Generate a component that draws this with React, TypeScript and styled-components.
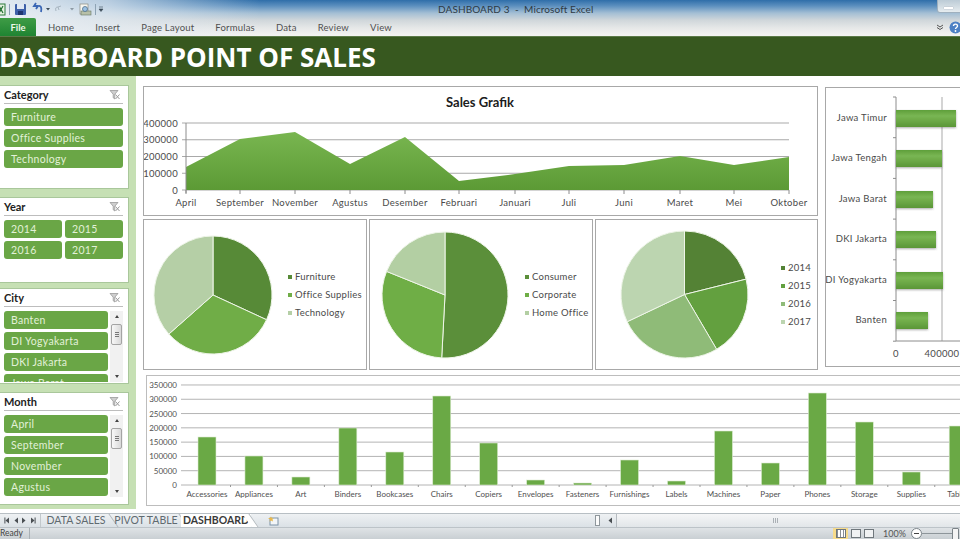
import styled, { createGlobalStyle } from "styled-components";

const GlobalStyle = createGlobalStyle`
    html, body { margin: 0; padding: 0; background: #fff; }
    * { box-sizing: border-box; }
`;

const Page = styled.div`
    width: 960px; height: 539px; overflow: hidden; display: flex; flex-direction: column;
    font-family: Lato, "Open Sans", sans-serif; color: #444;
`;

/* window chrome */
const Chrome = styled.header`
    height: 36px; flex: none;
    background:
        linear-gradient(90deg, rgba(235,240,245,.95) 0, rgba(225,233,240,.75) 110px, rgba(210,225,238,0) 260px),
        linear-gradient(180deg, #2f6ea9 0, #5d90bf 6px, #a3bed4 13px, #cfd6da 20px, #e6e8e8 28px, #f4f4f2 36px);
`;

const TitleBar = styled.div`
    height: 18px; display: flex; align-items: center; position: relative;
`;

const QuickAccess = styled.div`
    width: 438px; display: flex; align-items: center; height: 100%;
`;

const WindowTitle = styled.div`
    font-size: 10px; color: #2e3a44; letter-spacing: .1px; white-space: pre;
`;

const WindowButton = styled.div`
    margin-left: auto; margin-right: -18px; width: 41px; height: 13px; margin-top: -5px;
    border: 1px solid #9fb0be; border-top: 0; border-radius: 0 0 3px 3px;
    background: linear-gradient(180deg, #bccbd6, #e6ecef);
    display: flex; align-items: center; padding-left: 6px;
    &::before { content: ""; width: 9px; height: 2px; background: #fff; box-shadow: 0 0 1px #667; margin-top: 3px; }
`;

const TabRow = styled.nav`
    height: 18px; display: flex; align-items: center;
`;

const FileTab = styled.div`
    width: 36px; height: 18px; display: flex; align-items: center; justify-content: center;
    font-size: 9.5px; font-weight: 700; color: #eef8ea; border-radius: 0 2px 0 0;
    background: linear-gradient(180deg, #3f9c46, #1f8432);
`;

const RibbonTabs = styled.div`
    display: flex; gap: 21px; margin-left: 12px;
`;

const RibbonTab = styled.span`
    font-size: 9.5px; color: #505050; letter-spacing: .2px;
`;

const HelpGroup = styled.div`
    margin-left: auto; display: flex; align-items: center; gap: 5px; margin-right: -2px;
`;

const Banner = styled.div`
    height: 40px; flex: none; background: #37581f; display: flex; align-items: center;
    border-top: 1px solid #5c7a48;
`;

const BannerTitle = styled.h1`
    margin: 0 0 0 -1px; font-size: 26px; line-height: 1; font-weight: 700; color: #fff; white-space: nowrap;
    font-family: "Open Sans", Lato, sans-serif;
`;

const Body = styled.div`
    height: 437px; flex: none; display: flex; overflow: hidden;
`;

/* slicers */
const Sidebar = styled.aside`
    width: 136px; height: 433px; flex: none; background: #c6e0b4; padding-top: 9px;
    display: flex; flex-direction: column; align-items: flex-start;
`;

const Slicer = styled.section<{ $height: number; $gap: number }>`
    width: 129px; height: ${p => p.$height}px; margin-bottom: ${p => p.$gap}px; flex: none;
    background: #fff; border: 1px solid #a9c79b; border-left: 0; padding: 0 5px 0 4px; overflow: hidden;
`;

const SlicerHead = styled.div`
    height: 18px; display: flex; align-items: center; justify-content: space-between;
    border-bottom: 1px solid #bdbdbd; margin-bottom: 4px; padding-right: 2px;
`;

const SlicerTitle = styled.span`
    font-size: 11px; font-weight: 700; color: #222;
`;

const SlicerRows = styled.div`
    display: flex; gap: 2px;
`;

const ButtonList = styled.div<{ $cols?: number; $height?: number }>`
    flex: 1; display: grid; grid-template-columns: repeat(${p => p.$cols ?? 1}, 1fr);
    grid-auto-rows: 18px; gap: 3px; overflow: hidden;
    ${p => p.$height ? `height: ${p.$height}px;` : ""}
`;

const SlicerButton = styled.div`
    background: #6aa646; border-radius: 3px; padding-left: 7px; font-size: 10.5px; letter-spacing: .3px;
    line-height: 18px; color: #e2f1d8; white-space: nowrap;
`;

const ScrollTrack = styled.div<{ $height: number }>`
    width: 13px; height: ${p => p.$height}px; flex: none; background: #f1f1f1; position: relative;
    display: flex; flex-direction: column; justify-content: space-between; align-items: center; padding: 4px 0;
`;

const ScrollArrow = styled.span<{ $down?: boolean }>`
    width: 0; height: 0; border-left: 2.5px solid transparent; border-right: 2.5px solid transparent;
    ${p => p.$down ? "border-top: 3px solid #444;" : "border-bottom: 3px solid #444;"}
`;

const ScrollThumb = styled.span`
    position: absolute; top: 13px; left: 1px; width: 11px; height: 21px; border: 1px solid #a4a4a4; border-radius: 2px;
    background: linear-gradient(90deg, #f8f8f8, #d9d9d9);
    &::after { content: ""; position: absolute; left: 3px; top: 7px; width: 4px; height: 5px;
        background: repeating-linear-gradient(180deg, #777 0 1px, transparent 1px 2px); }
`;

/* chart cards */
const Content = styled.main`
    flex: 1; padding: 10px 0 0 7px; display: flex; flex-direction: column; gap: 5px; min-width: 0;
`;

const TopRow = styled.div`
    display: flex; gap: 7px;
`;

const LeftColumn = styled.div`
    width: 675px; flex: none; display: flex; flex-direction: column; gap: 3px;
`;

const Card = styled.div`
    background: #fff; border: 1px solid #a8a8a8; overflow: hidden;
`;

const SalesCard = styled(Card)`
    height: 130px; position: relative;
`;

const PieRow = styled.div`
    display: flex; gap: 2px; height: 151px;
`;

const PieCard = styled(Card)<{ $width: number; $inset: number }>`
    width: ${p => p.$width}px; flex: none; padding-left: ${p => p.$inset}px;
    display: flex; align-items: center;
`;

const Legend = styled.ul<{ $gap: number }>`
    list-style: none; margin: 0 0 0 ${p => p.$gap}px; padding: 0; display: flex; flex-direction: column; gap: 4px;
`;

const LegendItem = styled.li<{ $color: string }>`
    height: 14px; display: flex; align-items: center; gap: 3px; font-size: 9.5px; letter-spacing: .25px; color: #4a4a4a; white-space: nowrap;
    &::before { content: ""; width: 4px; height: 4px; background: ${p => p.$color}; }
`;

const CityCard = styled(Card)`
    width: 137px; height: 280px; flex: none; margin-top: 1px;
`;

const ProductCard = styled(Card)`
    width: 816px; height: 131px; flex: none; margin-left: 3px; border-color: #bdbdbd;
`;

const ChartSvg = styled.svg`
    display: block;
`;

const ChartTitle = styled.text`
    font-size: 13px; font-weight: 700; fill: #1c1c1c; text-anchor: middle;
`;

const AxisText = styled.text<{ $anchor?: string }>`
    font-size: 9.5px; fill: #4a4a4a; letter-spacing: .3px; text-anchor: ${p => p.$anchor ?? "middle"};
`;

const SmallAxisText = styled.text<{ $anchor?: string }>`
    font-size: 8px; fill: #505050; text-anchor: ${p => p.$anchor ?? "middle"};
`;

/* sheet tabs and status bar */
const SheetBar = styled.div`
    height: 14px; flex: none; display: flex; align-items: stretch; border-top: 1px solid #b8bfc4;
    background: linear-gradient(180deg, #eef1f3, #dbe1e6);
`;

const SheetNav = styled.div`
    width: 41px; flex: none; display: flex; align-items: center; justify-content: space-around;
    border-right: 1px solid #c2c8cc; padding: 0 3px;
`;

const SheetTab = styled.div<{ $active?: boolean; $width: number }>`
    width: ${p => p.$width}px; flex: none; position: relative; text-align: center; line-height: 13px;
    font-size: 10.5px; white-space: nowrap;
    color: ${p => p.$active ? "#3a3a3a" : "#5f6a70"}; font-weight: ${p => p.$active ? 700 : 400};
    background: ${p => p.$active ? "#fff" : "transparent"};
    &::after { content: ""; position: absolute; right: -3px; top: 0; height: 100%; width: 6px;
        border-right: 1px solid #aeb5ba; transform: skewX(35deg); background: ${p => p.$active ? "#fff" : "transparent"}; }
`;

const NewSheet = styled.div`
    width: 32px; flex: none; margin-left: 6px; display: flex; align-items: center; justify-content: center;
`;

const SheetSpacer = styled.div`
    flex: 1;
`;

const SplitHandle = styled.div`
    width: 5px; flex: none; margin: 1px 4px 1px 0; border: 1px solid #8f979c; background: #fbfbfb;
`;

const ArrowLeft = styled.div`
    width: 12px; flex: none; display: flex; align-items: center; justify-content: center;
`;

const HScroll = styled.div`
    width: 344px; flex: none; background: linear-gradient(180deg, #f5f6f7, #e2e6e9); border-left: 1px solid #b5bbc0;
    display: flex; align-items: center; justify-content: center; padding-right: 26px;
    &::after { content: ""; width: 6px; height: 5px; background: repeating-linear-gradient(90deg, #aab0b5 0 1px, transparent 1px 2px); }
`;

const StatusBar = styled.footer`
    height: 12px; flex: none; display: flex; align-items: center; border-top: 1px solid #bcc3c8;
    background: linear-gradient(180deg, #dfe3e6, #c9cfd3);
`;

const StatusText = styled.span`
    width: 30px; font-size: 8.5px; color: #444; padding-left: 0; border-right: 1px solid #a9b0b5; line-height: 11px;
`;

const ViewButtons = styled.div`
    margin-left: auto; display: flex; align-items: center; gap: 2px;
`;

const ViewButton = styled.div<{ $active?: boolean }>`
    width: ${p => p.$active ? 15 : 11}px; height: 11px; display: flex; align-items: center; justify-content: center;
    background: ${p => p.$active ? "#f7dc8c" : "transparent"};
    &::after { content: ""; width: 8px; height: 7px; border: 1px solid #6f777c;
        background: ${p => p.$active ? "repeating-linear-gradient(90deg, #8a8f93 0 1px, #fff 1px 3px)" : "#f0f2f3"}; }
`;

const ZoomLabel = styled.span`
    font-size: 9px; color: #555; margin-left: 9px; width: 22px;
`;

const ZoomMinus = styled.span`
    width: 11px; height: 11px; border-radius: 50%; margin-left: 6px; border: 1px solid #7c858b; background: #fff;
    display: flex; align-items: center; justify-content: center; flex: none;
    &::after { content: ""; width: 5px; height: 1px; background: #444; }
`;

const ZoomTrack = styled.span`
    width: 33px; height: 1px; flex: none; background: #8d959a; position: relative; margin-right: 5px;
    &::after { content: ""; position: absolute; right: -4px; top: -5px; width: 5px; height: 10px;
        background: #f5f5f5; border: 1px solid #7b8388; border-radius: 1px; }
`;

/* data */
const months = [
    ["April", 186, 167], ["September", 240, 139], ["November", 295, 132], ["Agustus", 350, 164],
    ["Desember", 405, 137], ["Februari", 459, 181], ["Januari", 515, 174], ["Juli", 569, 166],
    ["Juni", 624, 165], ["Maret", 680, 156], ["Mei", 734, 165], ["Oktober", 789, 157],
] as const;

const pies = [
    {
        width: 224, inset: 9, r: 59, gap: 15, stops: [114.8, 228.5, 360],
        colors: ["#578a37", "#70ad47", "#b5cfa6"], legend: ["Furniture", "Office Supplies", "Technology"],
    },
    {
        width: 224, inset: 11, r: 63, gap: 16, stops: [183, 292, 360],
        colors: ["#5b8f3a", "#6fae46", "#b3cfa3"], legend: ["Consumer", "Corporate", "Home Office"],
    },
    {
        width: 223, inset: 24, r: 63.5, gap: 32, stops: [76, 149.6, 244.6, 360],
        colors: ["#548235", "#63a03f", "#8fbb78", "#bcd5b0"], legend: ["2014", "2015", "2016", "2017"],
    },
];

const cities = [
    ["Jawa Timur", 111, 956], ["Jawa Tengah", 151, 942], ["Jawa Barat", 192, 933],
    ["DKI Jakarta", 232, 936], ["DI Yogyakarta", 273, 943], ["Banten", 313, 928],
] as const;

const products = [
    ["Accessories", 437], ["Appliances", 456], ["Art", 477], ["Binders", 428], ["Bookcases", 452], ["Chairs", 396],
    ["Copiers", 443], ["Envelopes", 480], ["Fasteners", 483], ["Furnishings", 460], ["Labels", 481], ["Machines", 431],
    ["Paper", 463], ["Phones", 393], ["Storage", 422], ["Supplies", 472], ["Tables", 426],
] as const;

const ClearIcon = () => (
    <svg width="12" height="12" viewBox="0 0 12 12">
        <path d="M1 1.5h8L5.8 5.2V10L4.2 8.8V5.2Z" fill="#cfcfcf" stroke="#8f8f8f" strokeWidth=".7" />
        <path d="M6.5 5.5l4 4.5M10.5 5.5l-4 4.5" stroke="#9a9a9a" strokeWidth="1" />
    </svg>
);

const Triangle = ({ dir = 1, bar = false }: { dir?: number; bar?: boolean }) => (
    <svg width="6" height="7" viewBox="0 0 6 7">
        <path d={dir > 0 ? "M1 .5 4.5 3.5 1 6.5Z" : "M5 .5 1.5 3.5 5 6.5Z"} fill="#4a4f53" />
        {bar ? <rect x={dir > 0 ? 4.6 : 0.4} y=".5" width="1" height="6" fill="#4a4f53" /> : null}
    </svg>
);

const QuickIcons = () => (
    <ChartSvg width="110" height="16" viewBox="0 0 110 16">
        <rect x="-6" y="3" width="11" height="11" fill="#e6f2e2" stroke="#2b7a3b" />
        <path d="M-1 5l4 7M3 5l-4 7" stroke="#1f6f30" strokeWidth="1.2" />
        <rect x="9" y="3" width="1" height="11" fill="#8ea3b4" />
        <rect x="15" y="3" width="11" height="11" rx="1" fill="#3d5fa8" />
        <rect x="17" y="3" width="7" height="5" fill="#dfe7f3" />
        <rect x="18" y="10" width="5" height="4" fill="#1f3570" />
        <path d="M38 5c3-1 4 2 3 6M38 5l-4 0 2-3M38 5l-2 3" stroke="#3a66b4" strokeWidth="1.8" fill="none" />
        <path d="M46 7h4l-2 2.5Z" fill="#3b4a58" />
        <path d="M58 6c-2 0-3 1-2 4M61 5l-3 1 1 3" stroke="#a7b5c0" strokeWidth="1" fill="none" />
        <path d="M70 7h4l-2 2.5Z" fill="#8d9aa5" />
        <rect x="80" y="3" width="8" height="10" fill="#f6f6f0" stroke="#8b8b80" strokeWidth=".7" />
        <rect x="81" y="10" width="10" height="4" fill="#b8c0a8" stroke="#676" strokeWidth=".6" />
        <circle cx="85" cy="8" r="2.5" fill="#9cc2e4" stroke="#50708c" strokeWidth=".8" />
        <rect x="95" y="3" width="1" height="11" fill="#8ea3b4" />
        <path d="M99 6h4M99 8h4l-2 2.5Z" stroke="#3b4a58" strokeWidth=".6" fill="#3b4a58" />
    </ChartSvg>
);

const polar = (cx: number, cy: number, r: number, deg: number) => {
    const a = (deg - 90) * Math.PI / 180;
    return [cx + r * Math.cos(a), cy + r * Math.sin(a)];
};

const Pie = ({ r, stops, colors }: { r: number; stops: number[]; colors: string[] }) => {
    const c = r + 1;
    return (
        <ChartSvg width={c * 2} height={c * 2} viewBox={`0 0 ${c * 2} ${c * 2}`}>
            {stops.map((end, i) => {
                const start = i ? stops[i - 1] : 0;
                const [x1, y1] = polar(c, c, r, start);
                const [x2, y2] = polar(c, c, r, end);
                return (
                    <path
                        key={i}
                        d={`M${c} ${c}L${x1} ${y1}A${r} ${r} 0 ${end - start > 180 ? 1 : 0} 1 ${x2} ${y2}Z`}
                        fill={colors[i]}
                        stroke="#eef5e8"
                        strokeWidth="1"
                    />
                );
            })}
        </ChartSvg>
    );
};

// coordinates below are page pixels, shifted by the card origin
const SalesChart = () => {
    const ox = 144, oy = 87;
    const area = months.map(m => `${m[1] - ox},${m[2] - oy}`).join(" ");
    return (
        <ChartSvg width="673" height="128" viewBox="0 0 673 128">
            <defs>
                <linearGradient id="areaFill" x1="0" y1="0" x2="0" y2="1">
                    <stop offset="0" stopColor="#79b650" />
                    <stop offset="1" stopColor="#5c9a35" />
                </linearGradient>
            </defs>
            <ChartTitle x={336} y={20}>Sales Grafik</ChartTitle>
            {[0, 1, 2, 3, 4].map(i => {
                const y = 190 - i * 16.75 - oy;
                return (
                    <g key={i}>
                        <line x1={38} x2={645} y1={y} y2={y} stroke="#a9a9a9" />
                        <AxisText $anchor="end" x={34} y={y + 3.5}>{i * 100000}</AxisText>
                    </g>
                );
            })}
            <polygon points={`${186 - ox},${190 - oy} ${area} ${789 - ox},${190 - oy}`} fill="url(#areaFill)" />
            <line x1={186 - ox} x2={186 - ox} y1={36} y2={106} stroke="#8c8c8c" />
            {months.map(m => (
                <g key={m[0]}>
                    <line x1={m[1] - ox} x2={m[1] - ox} y1={103} y2={107} stroke="#8c8c8c" />
                    <AxisText x={m[1] - ox} y={119}>{m[0]}</AxisText>
                </g>
            ))}
        </ChartSvg>
    );
};

const CityChart = () => {
    const ox = 826, oy = 89;
    const axis = 896 - ox;
    return (
        <ChartSvg width="135" height="278" viewBox="0 0 135 278">
            <defs>
                <linearGradient id="barFill" x1="0" y1="0" x2="0" y2="1">
                    <stop offset="0" stopColor="#5f9f3b" />
                    <stop offset=".35" stopColor="#79b653" />
                    <stop offset="1" stopColor="#5a9636" />
                </linearGradient>
                <filter id="barShadow" x="-10%" y="-20%" width="120%" height="150%">
                    <feDropShadow dx="0" dy="1" stdDeviation="1" floodColor="#555" floodOpacity=".5" />
                </filter>
            </defs>
            <line x1={942 - ox} x2={942 - ox} y1={9} y2={253} stroke="#a9a9a9" />
            <line x1={axis} x2={axis} y1={9} y2={253} stroke="#8c8c8c" />
            {[0, 1, 2, 3, 4, 5, 6].map(i => (
                <line key={i} x1={axis - 3} x2={axis} y1={9 + i * 40.7} y2={9 + i * 40.7} stroke="#8c8c8c" />
            ))}
            <line x1={axis} x2={942 - ox + 20} y1={253} y2={253} stroke="#8c8c8c" />
            {cities.map(c => (
                <g key={c[0]}>
                    <rect x={axis} y={c[1] - oy} width={c[2] - 896} height={17} fill="url(#barFill)" filter="url(#barShadow)" />
                    <AxisText $anchor="end" x={887 - ox} y={c[1] - oy + 11}>{c[0]}</AxisText>
                </g>
            ))}
            <AxisText x={axis} y={269}>0</AxisText>
            <AxisText x={942 - ox} y={269}>400000</AxisText>
        </ChartSvg>
    );
};

const ProductChart = () => {
    const ox = 147, oy = 376;
    const base = 485 - oy;
    return (
        <ChartSvg width="814" height="129" viewBox="0 0 814 129">
            {[0, 1, 2, 3, 4, 5, 6, 7].map(i => {
                const y = base - i * 14.29;
                return (
                    <g key={i}>
                        <line x1={34} x2={814} y1={y} y2={y} stroke="#b4b4b4" />
                        <SmallAxisText $anchor="end" x={30} y={y + 3}>{i * 50000}</SmallAxisText>
                    </g>
                );
            })}
            {products.map((p, i) => {
                const x = 207 - ox + i * 46.95;
                return (
                    <g key={p[0]}>
                        <rect x={x - 9} y={p[1] - oy} width={18} height={485 - p[1]} fill="#6aa945" stroke="#dcebd2" strokeWidth=".6" />
                        <line x1={x + 23.5} x2={x + 23.5} y1={base} y2={base + 2} stroke="#999" />
                        <SmallAxisText x={x} y={121}>{p[0]}</SmallAxisText>
                    </g>
                );
            })}
        </ChartSvg>
    );
};

export default function App() {
    return (
        <Page>
            <GlobalStyle />
            <Chrome>
                <TitleBar>
                    <QuickAccess><QuickIcons /></QuickAccess>
                    <WindowTitle>DASHBOARD 3  -  Microsoft Excel</WindowTitle>
                    <WindowButton />
                </TitleBar>
                <TabRow>
                    <FileTab>File</FileTab>
                    <RibbonTabs>
                        {["Home", "Insert", "Page Layout", "Formulas", "Data", "Review", "View"].map(t => (
                            <RibbonTab key={t}>{t}</RibbonTab>
                        ))}
                    </RibbonTabs>
                    <HelpGroup>
                        <svg width="8" height="8" viewBox="0 0 8 8">
                            <path d="M1 2l3 2 3-2M1 4.5l3 2 3-2" fill="none" stroke="#555" />
                        </svg>
                        <svg width="13" height="13" viewBox="0 0 13 13">
                            <circle cx="6.5" cy="6.5" r="6" fill="#4d80c4" />
                            <path d="M4.5 5c0-2.500 4-2.500 4 0 0 1.500-2 1.500-2 3" fill="none" stroke="#fff" strokeWidth="1.400" />
                            <circle cx="6.500" cy="10" r=".9" fill="#fff" />
                        </svg>
                    </HelpGroup>
                </TabRow>
            </Chrome>
            <Banner><BannerTitle>DASHBOARD POINT OF SALES</BannerTitle></Banner>
            <Body>
                <Sidebar>
                    <Slicer $height={104} $gap={8}>
                        <SlicerHead><SlicerTitle>Category</SlicerTitle><ClearIcon /></SlicerHead>
                        <ButtonList>
                            {["Furniture", "Office Supplies", "Technology"].map(t => <SlicerButton key={t}>{t}</SlicerButton>)}
                        </ButtonList>
                    </Slicer>
                    <Slicer $height={86} $gap={5}>
                        <SlicerHead><SlicerTitle>Year</SlicerTitle><ClearIcon /></SlicerHead>
                        <ButtonList $cols={2}>
                            {["2014", "2015", "2016", "2017"].map(t => <SlicerButton key={t}>{t}</SlicerButton>)}
                        </ButtonList>
                    </Slicer>
                    <Slicer $height={96} $gap={8}>
                        <SlicerHead><SlicerTitle>City</SlicerTitle><ClearIcon /></SlicerHead>
                        <SlicerRows>
                            <ButtonList $height={71}>
                                {["Banten", "DI Yogyakarta", "DKI Jakarta", "Jawa Barat"].map(t => <SlicerButton key={t}>{t}</SlicerButton>)}
                            </ButtonList>
                            <ScrollTrack $height={71}><ScrollArrow /><ScrollThumb /><ScrollArrow $down /></ScrollTrack>
                        </SlicerRows>
                    </Slicer>
                    <Slicer $height={113} $gap={0}>
                        <SlicerHead><SlicerTitle>Month</SlicerTitle><ClearIcon /></SlicerHead>
                        <SlicerRows>
                            <ButtonList $height={81}>
                                {["April", "September", "November", "Agustus"].map(t => <SlicerButton key={t}>{t}</SlicerButton>)}
                            </ButtonList>
                            <ScrollTrack $height={82}><ScrollArrow /><ScrollThumb /><ScrollArrow $down /></ScrollTrack>
                        </SlicerRows>
                    </Slicer>
                </Sidebar>
                <Content>
                    <TopRow>
                        <LeftColumn>
                            <SalesCard><SalesChart /></SalesCard>
                            <PieRow>
                                {pies.map(p => (
                                    <PieCard key={p.legend[0]} $width={p.width} $inset={p.inset}>
                                        <Pie r={p.r} stops={p.stops} colors={p.colors} />
                                        <Legend $gap={p.gap}>
                                            {p.legend.map((t, i) => <LegendItem key={t} $color={p.colors[i]}>{t}</LegendItem>)}
                                        </Legend>
                                    </PieCard>
                                ))}
                            </PieRow>
                        </LeftColumn>
                        <CityCard><CityChart /></CityCard>
                    </TopRow>
                    <ProductCard><ProductChart /></ProductCard>
                </Content>
            </Body>
            <SheetBar>
                <SheetNav>
                    <Triangle dir={-1} bar /><Triangle dir={-1} /><Triangle /><Triangle bar />
                </SheetNav>
                <SheetTab $width={70}>DATA SALES</SheetTab>
                <SheetTab $width={70}>PIVOT TABLE</SheetTab>
                <SheetTab $width={70} $active>DASHBOARD</SheetTab>
                <NewSheet>
                    <svg width="11" height="10" viewBox="0 0 11 10">
                        <rect x="2" y="2" width="8" height="7" fill="#f3f6f8" stroke="#7c93a8" />
                        <path d="M3 0.500l1 2 2-.500-1.500 1.500.500 2-2-1-1.500 1 .500-2L0 2l2 0Z" fill="#e9b84a" />
                    </svg>
                </NewSheet>
                <SheetSpacer />
                <SplitHandle />
                <ArrowLeft><Triangle dir={-1} /></ArrowLeft>
                <HScroll />
            </SheetBar>
            <StatusBar>
                <StatusText>Ready</StatusText>
                <ViewButtons>
                    <ViewButton $active /><ViewButton /><ViewButton />
                </ViewButtons>
                <ZoomLabel>100%</ZoomLabel>
                <ZoomMinus />
                <ZoomTrack />
            </StatusBar>
        </Page>
    );
}
